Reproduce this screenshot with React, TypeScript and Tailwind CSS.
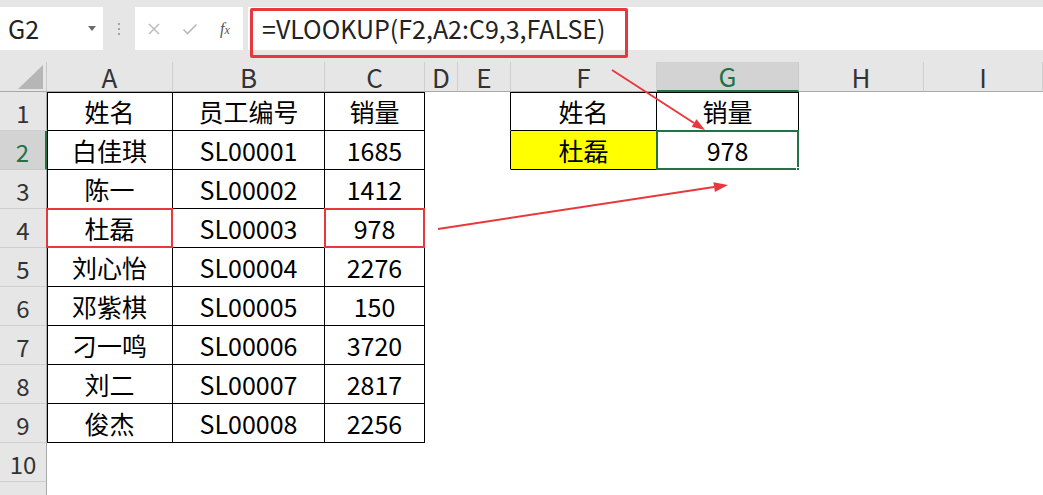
import React from "react";

const rows: string[][] = [
  ["姓名", "员工编号", "销量", "", "", "姓名", "销量", "", ""],
  ["白佳琪", "SL00001", "1685", "", "", "杜磊", "978", "", ""],
  ["陈一", "SL00002", "1412", "", "", "", "", "", ""],
  ["杜磊", "SL00003", "978", "", "", "", "", "", ""],
  ["刘心怡", "SL00004", "2276", "", "", "", "", "", ""],
  ["邓紫棋", "SL00005", "150", "", "", "", "", "", ""],
  ["刁一鸣", "SL00006", "3720", "", "", "", "", "", ""],
  ["刘二", "SL00007", "2817", "", "", "", "", "", ""],
  ["俊杰", "SL00008", "2256", "", "", "", "", "", ""],
  ["", "", "", "", "", "", "", "", ""],
  ["", "", "", "", "", "", "", "", ""],
];

const letters = ["A", "B", "C", "D", "E", "F", "G", "H", "I"];

function cellClass(r: number, c: number): string {
  const t1 = r <= 9 && c <= 2;
  const t2 = (r === 1 || r === 2) && (c === 5 || c === 6);
  let cls = "relative flex items-center justify-center border-r border-b text-[25px] text-black leading-none ";
  if (t1 || t2) cls += "border-black ";
  else if (c === 4 && (r === 1 || r === 2)) cls += "border-r-black border-b-white ";
  else cls += "border-white ";
  if (t1 && c === 0 && r === 1) cls += "shadow-[inset_1px_1px_0_#000] ";
  else if (t1 && c === 0) cls += "shadow-[inset_1px_0_0_#000] ";
  else if ((t1 || t2) && r === 1) cls += "shadow-[inset_0_1px_0_#000] ";
  if (r === 2 && c === 5) cls += "bg-[#ffff00] ";
  else cls += "bg-white ";
  return cls;
}

export default function App() {
  return (
    <div className="relative w-[1043px] h-[495px] overflow-hidden bg-white font-['Noto_Sans_CJK_SC','Noto_Sans',sans-serif]">
      {/* toolbar */}
      <div className="h-[62px] bg-[#e6e6e6] flex items-start pt-[7px]">
        <div className="w-[103px] h-[43px] bg-white flex items-center justify-between pl-[8px] pr-[7px]">
          <span className="text-[25px] text-[#222] leading-none">G2</span>
          <svg width="8" height="5" viewBox="0 0 8 5"><path d="M0 0 L8 0 L4 5 Z" fill="#6a6a6a" /></svg>
        </div>
        <div className="w-[32px] h-[43px] flex flex-col items-center justify-center gap-[3px]">
          <span className="w-[2px] h-[2px] bg-[#a5a5a5]" />
          <span className="w-[2px] h-[2px] bg-[#a5a5a5]" />
          <span className="w-[2px] h-[2px] bg-[#a5a5a5]" />
        </div>
        <div className="w-[108px] h-[43px] bg-white flex items-center pl-[12px]">
          <svg width="14" height="14" viewBox="0 0 14 14"><path d="M2 2 L12 12 M12 2 L2 12" stroke="#b9b9b9" strokeWidth="1.4" /></svg>
          <svg className="ml-[21px]" width="16" height="14" viewBox="0 0 16 14"><path d="M1.5 7.5 L5.5 11.5 L14.5 2.5" stroke="#b9b9b9" strokeWidth="1.6" fill="none" /></svg>
          <span className="ml-[22px] font-['Liberation_Serif',serif] italic text-[16px] text-[#555] leading-none">f<span className="text-[12px]">x</span></span>
        </div>
        <div className="relative ml-[5px] flex-1 h-[43px] bg-white flex items-center pl-[14px]">
          <span className="text-[25px] text-[#222] leading-none">=VLOOKUP(F2,A2:C9,3,FALSE)</span>
          <div className="absolute left-[2px] top-[1px] w-[378px] h-[50px] border-[3px] border-[#e8383d] rounded-[2px]" />
        </div>
      </div>

      {/* sheet grid */}
      <div className="grid grid-cols-[47px_126px_152px_100px_33px_53px_146px_142px_125px_1fr] auto-rows-[39px] grid-rows-[30px]">
        <div className="h-[30px] bg-[#e6e6e6] border-r border-b border-r-[#c8c8c8] border-b-[#a8a8a8] relative">
          <svg className="absolute left-[18px] top-[3px]" width="25" height="24" viewBox="0 0 25 24"><path d="M25 0 L25 24 L0 24 Z" fill="#b6b6b6" /></svg>
        </div>
        {letters.map((l, i) =>
          i === 6 ? (
            <div key={l} className="h-[30px] bg-[#d3d3d3] border-r border-r-[#c8c8c8] border-b-2 border-b-[#217346] flex items-center justify-center text-[26px] leading-none text-[#217346]">
              {l}
            </div>
          ) : (
            <div key={l} className="h-[30px] bg-[#e6e6e6] border-r border-b border-r-[#cfcfcf] border-b-[#a8a8a8] flex items-center justify-center text-[26px] leading-none text-[#333]">
              {l}
            </div>
          )
        )}

        {rows.map((row, ri) => {
          const r = ri + 1;
          return (
            <React.Fragment key={r}>
              {r === 2 ? (
                <div className="bg-[#d3d3d3] border-b border-b-[#c8c8c8] border-r-2 border-r-[#217346] flex items-end justify-center pb-[5px] text-[24px] leading-none text-[#217346]">
                  {r}
                </div>
              ) : (
                <div className="bg-[#e6e6e6] border-b border-r border-b-[#cfcfcf] border-r-[#a8a8a8] flex items-end justify-center pb-[5px] text-[24px] leading-none text-[#333]">
                  {r}
                </div>
              )}
              {row.map((v, c) => (
                <div key={c} className={cellClass(r, c)}>
                  <span>{v}</span>
                  {r === 4 && (c === 0 || c === 2) && (
                    <div className="absolute left-[-1px] top-[-1px] right-[-1px] bottom-[-1px] border-2 border-[#e8383d]" />
                  )}
                  {r === 2 && c === 6 && (
                    <>
                      <div className="absolute left-[-1px] top-[-1px] right-[-1px] bottom-[-1px] border-2 border-[#217346]" />
                      <div className="absolute right-[-4px] bottom-[-4px] w-[6px] h-[6px] bg-[#217346] border border-white" />
                    </>
                  )}
                </div>
              ))}
            </React.Fragment>
          );
        })}
      </div>

      {/* arrows overlay */}
      <svg className="absolute left-0 top-0 pointer-events-none" width="1043" height="495" viewBox="0 0 1043 495">
        <path d="M612 70 L694 123" stroke="#e8383d" strokeWidth="2" fill="none" />
        <path d="M705 130 L691.7 126.7 L696.5 119.2 Z" fill="#e8383d" />
        <path d="M438 229 L714 187" stroke="#e8383d" strokeWidth="2" fill="none" />
        <path d="M728 185 L714.9 192 L713.4 182.2 Z" fill="#e8383d" />
      </svg>
    </div>
  );
}
